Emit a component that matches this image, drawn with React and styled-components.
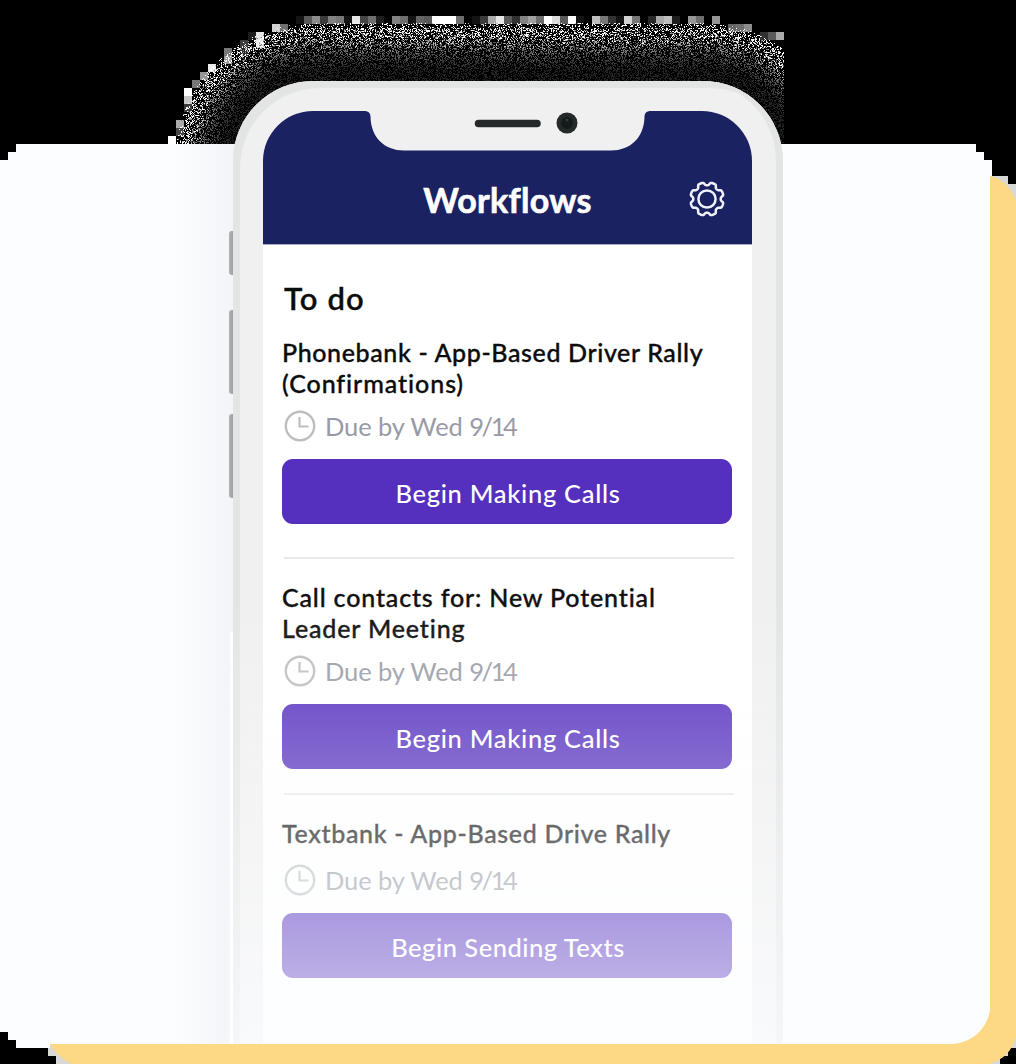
import React from "react";
import styled, { createGlobalStyle } from "styled-components";

const GlobalStyle = createGlobalStyle`
  * { box-sizing: border-box; }
  body { margin: 0; background: #000; font-family: Lato, "Noto Sans", sans-serif; }
  h1, h2, h3, p { margin: 0; }
`;

const Stage = styled.main`
  display: grid;
  width: 1016px;
  height: 1064px;
  overflow: hidden;
  background: #000;
  > * { grid-area: 1 / 1; z-index: 0; }
`;

const CornerHaze = styled.div`
  background: #d8d9d6;
  clip-path: polygon(990px 176px, 1008px 176px, 1008px 184px, 1016px 184px, 1016px 1048px, 1008px 1048px, 1008px 1056px, 1000px 1056px, 1000px 1064px, 56px 1064px, 56px 1056px, 48px 1056px, 48px 1040px, 990px 1040px);
`;

const YellowCard = styled.div`
  background: #fdd885;
  clip-path: path("M989 176 C1003 178 1011 188 1016 201 L1016 1037 C1012 1051 1003 1060 989 1064 L72 1064 C63 1060 55 1053 50 1044 L900 1044 Z");
`;

const WhiteCard = styled.div`
  background: #fcfdff;
  clip-path: path("M16 144 H976 V152 H984 V160 H992 V176 H990 V1009 C988 1027 974 1042 953 1044 H50 V1048 H16 V1040 H8 V1032 H0 V160 H8 V152 H16 Z");
`;

const SideShadow = styled.div`
  margin: 144px 0 20px 176px;
  width: 60px;
  background: linear-gradient(to right, rgba(242, 244, 247, 0), rgba(242, 244, 247, 1));
`;

const Grain = styled.svg`
  display: block;
`;

const Phone = styled.section`
  margin: 81px 0 0 233px;
  width: 550px;
  height: 963px;
  padding: 30px 31px 0 30px;
  border-radius: 80px 80px 0 0;
  background: #f0f0f0;
  box-shadow: inset 7px 7px 1px #e3e4e4, inset -7px 0 1px #e3e4e4;
`;

const Screen = styled.div`
  height: 100%;
  border-radius: 50px 50px 0 0;
  overflow: hidden;
  background: #fff;
`;

const Header = styled.header`
  display: grid;
  grid-template-rows: 40px 93px;
  grid-template-columns: 1fr auto 1fr;
  height: 134px;
  background: #1b2262;
  border-bottom: 1px solid #a9acca;
`;

const Notch = styled.svg`
  grid-column: 1 / -1;
  display: block;
`;

const HeaderTitle = styled.h1`
  grid-column: 2;
  padding-top: 28px;
  color: #fff;
  font-size: 34px;
  font-weight: 700;
  line-height: 42px;
  letter-spacing: ${(p) => p.$track}px;
  -webkit-text-stroke: 0.6px #fff;
`;

const Gear = styled.svg`
  justify-self: end;
  margin: 30px 27px 0 0;
`;

const Body = styled.div`
  padding: 34px 20px 0 19px;
`;

const SectionTitle = styled.h2`
  padding-left: 2px;
  color: #0c0c0c;
  font-size: 31px;
  font-weight: 600;
  line-height: 38px;
  letter-spacing: ${(p) => p.$track}px;
  -webkit-text-stroke: 0.3px #0c0c0c;
`;

const Task = styled.article`
  padding-top: ${(p) => p.$top}px;
`;

const TaskTitle = styled.h3`
  color: #0c0c0c;
  font-size: 25px;
  font-weight: 500;
  line-height: 31px;
  white-space: nowrap;
  -webkit-text-stroke: 0.35px #0c0c0c;
`;

const Line = styled.span`
  display: block;
  letter-spacing: ${(p) => p.$track}px;
`;

const Due = styled.div`
  display: flex;
  align-items: center;
  gap: 9px;
  height: 32px;
  margin-top: ${(p) => p.$gap}px;
  padding-left: 2px;
`;

const DueText = styled.p`
  color: #989ba6;
  font-size: 25.5px;
  line-height: 32px;
  letter-spacing: ${(p) => p.$track}px;
`;

const DueDate = styled.span`
  letter-spacing: ${(p) => p.$track}px;
`;

const Action = styled.button`
  display: flex;
  align-items: center;
  justify-content: center;
  width: 450px;
  height: 65px;
  margin: 17px 0 0;
  padding: 3px 0 0 2px;
  border: 0;
  border-radius: 11px;
  background: #5530be;
  color: #fff;
  font: 500 25.5px Lato, "Noto Sans", sans-serif;
  letter-spacing: ${(p) => p.$track}px;
`;

const Divider = styled.hr`
  width: 450px;
  height: 2px;
  margin: ${(p) => p.$top}px 0 0 2px;
  border: 0;
  background: #e8e9eb;
`;

const Fade = styled.div`
  margin: 585px 0 20px 225px;
  width: 560px;
  background: linear-gradient(to bottom, rgba(252, 253, 255, 0), rgba(252, 253, 255, 0.72));
  mask-image: linear-gradient(to right, transparent, #000 8px, #000);
`;

const EdgeGlint = styled.div`
  margin: 632px 0 20px 230px;
  width: 3px;
  background: rgba(255, 255, 255, 0.85);
`;

const SideKeys = styled.div`
  display: flex;
  flex-direction: column;
  margin: 231px 0 0 229px;
  width: 5px;
`;

const Key = styled.i`
  height: ${(p) => p.$h}px;
  margin-bottom: ${(p) => p.$gap}px;
  border-radius: 3px 0 0 3px;
  background: linear-gradient(to right, #b0b2b4, #9b9d9f);
`;

function makeGrain() {
  let seed = 9157;
  const rand = () => {
    seed = (seed * 1664525 + 1013904223) >>> 0;
    return seed / 4294967296;
  };
  const shades = ["#fff", "#bdbdbd", "#858585", "#555", "#363636", "#222"];
  const paths = shades.map(() => "");
  const distance = (x, y) => {
    const cx = Math.min(Math.max(x, 312), 704);
    return Math.hypot(x - cx, y - 160) - 78;
  };
  for (let y = 20; y < 144; y += 1) {
    for (let x = 176; x < 784; x += 1) {
      const d = distance(x, y);
      if (d < -2 || d > 59) continue;
      const t = d / 58;
      const density = t > 0.94 ? 0.22 : 0.42;
      if (rand() > density) continue;
      const level = Math.pow(Math.max(t, 0), 2) * (0.35 + rand() * 1.1);
      const i = level > 0.62 ? 0 : level > 0.46 ? 1 : level > 0.32 ? 2 : level > 0.17 ? 3 : level > 0.07 ? 4 : 5;
      paths[i] += `M${x} ${y}h1v1h-1z`;
    }
  }
  const blocks = [];
  const topRow = [20, 90, 140, 60, 130, 120, 20, 230, 70, 110, 30, 0, 130, 110, 20, 100, 90, 255, 255, 255, 110, 0, 20, 60, 170, 230, 90, 50, 130, 160, 110, 255, 220, 90, 255, 20, 0, 190, 120, 50, 20, 210, 120, 0, 40, 170, 190, 30, 0, 150, 110, 0, 150, 0];
  topRow.forEach((v, i) => blocks.push([296 + i * 8, 16, v]));
  [[272, 24, 210], [280, 24, 110], [248, 32, 30], [256, 32, 230], [240, 40, 60], [256, 40, 235], [240, 48, 40], [224, 48, 120], [224, 56, 150], [208, 64, 235], [200, 72, 150], [192, 80, 120], [184, 88, 255], [184, 96, 200], [184, 104, 60], [176, 120, 170], [176, 128, 70], [168, 136, 255], [728, 24, 100], [736, 24, 110], [744, 24, 140], [760, 32, 50], [768, 32, 90], [776, 32, 170]].forEach((b) => blocks.push(b));
  return { shades, paths, blocks };
}

const grain = makeGrain();

function GrainHalo() {
  return (
    <Grain width="1016" height="1064" viewBox="0 0 1016 1064" shapeRendering="crispEdges">
      {grain.blocks.map(([x, y, v]) => (
        <rect key={`${x}-${y}`} x={x} y={y} width="8" height="8" fill={`rgb(${v},${v},${v})`} />
      ))}
      {grain.paths.map((d, i) => (
        <path key={grain.shades[i]} d={d} fill={grain.shades[i]} />
      ))}
    </Grain>
  );
}

function gearPath() {
  let d = "";
  const n = 144;
  for (let i = 0; i < n; i += 1) {
    const a = (i / n) * Math.PI * 2;
    const wave = Math.cos(8 * a + Math.PI);
    const r = 15.2 + (1.55 * Math.tanh(2.2 * (wave + 0.25))) / Math.tanh(2.2);
    d += `${i ? "L" : "M"}${(18 + r * Math.cos(a)).toFixed(2)} ${(18 + r * Math.sin(a)).toFixed(2)}`;
  }
  return `${d}Z`;
}

function TaskItem({ top, lines, gap, action, track }) {
  return (
    <Task $top={top}>
      <TaskTitle>
        {lines.map(([text, t]) => (
          <Line key={text} $track={t}>{text}</Line>
        ))}
      </TaskTitle>
      <Due $gap={gap}>
        <svg width="32" height="32" viewBox="0 0 32 32" fill="none" stroke="#bdbec0" strokeWidth="2.4">
          <circle cx="16" cy="16" r="14.2" />
          <path d="M15.500 7V16.500H24.500" strokeWidth="2.200" />
        </svg>
        <DueText $track={-0.1}>
          Due by Wed <DueDate $track={-2.4}>9/14</DueDate>
        </DueText>
      </Due>
      <Action $track={track}>{action}</Action>
    </Task>
  );
}

export default function App() {
  return (
    <>
      <GlobalStyle />
      <Stage>
        <CornerHaze />
        <YellowCard />
        <WhiteCard />
        <SideShadow />
        <GrainHalo />
        <SideKeys>
          <Key $h={44} $gap={35} />
          <Key $h={84} $gap={20} />
          <Key $h={84} $gap={0} />
        </SideKeys>
        <Phone>
          <Screen>
            <Header>
              <Notch width="489" height="40" viewBox="0 0 489 40">
                <path d="M101 0C105.500 0 107.500 2 107.500 6C108 26 121 39.500 141 39.500H348C368 39.500 381 26 381.500 6C381.500 2 383.500 0 388 0Z" fill="#f0f0f0" />
                <path d="M215.500 12.500H274" stroke="#242a2a" strokeWidth="7.500" strokeLinecap="round" />
                <circle cx="304" cy="12" r="10.500" fill="#242929" />
                <circle cx="304" cy="12" r="6" fill="#151a1b" />
                <circle cx="304" cy="9" r="1.500" fill="#343b3c" />
              </Notch>
              <HeaderTitle $track={0.3}>Workflows</HeaderTitle>
              <Gear width="36" height="36" viewBox="0 0 36 36" fill="none" stroke="#eef2ff" strokeWidth="2.500" strokeLinejoin="round">
                <path d={gearPath()} />
                <circle cx="18" cy="18" r="8.600" />
              </Gear>
            </Header>
            <Body>
              <SectionTitle $track={1.1}>To do</SectionTitle>
              <TaskItem top={20} lines={[["Phonebank - App-Based Driver Rally", 0.62], ["(Confirmations)", 0.93]]} gap={11} action="Begin Making Calls" track={0.7} />
              <Divider $top={33} />
              <TaskItem top={23} lines={[["Call contacts for: New Potential", 0.84], ["Leader Meeting", 0.85]]} gap={11} action="Begin Making Calls" track={0.7} />
              <Divider $top={24} />
              <TaskItem top={23} lines={[["Textbank - App-Based Drive Rally", 0.67]]} gap={15} action="Begin Sending Texts" track={0.5} />
            </Body>
          </Screen>
        </Phone>
        <Fade />
        <EdgeGlint />
      </Stage>
    </>
  );
}
